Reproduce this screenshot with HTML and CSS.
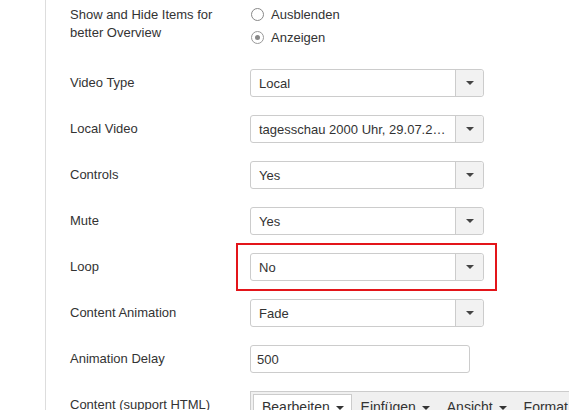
FILE: index.html
```html
<!DOCTYPE html>
<html lang="en">
<head>
    <meta charset="UTF-8">
    <title>Video Module Options</title>
    <link rel="stylesheet" href="styles.css">
</head>
<body>
    <div class="panel">
        <div class="row row-top row-first">
            <div class="label">Show and Hide Items for better Overview</div>
            <div class="radios">
                <label class="radio"><span class="dot"></span>Ausblenden</label>
                <label class="radio"><span class="dot checked"></span>Anzeigen</label>
            </div>
        </div>

        <div class="row">
            <div class="label">Video Type</div>
            <div class="select"><span class="value">Local</span><span class="arrow"></span></div>
        </div>

        <div class="row">
            <div class="label">Local Video</div>
            <div class="select"><span class="value">tagesschau 2000 Uhr, 29.07.2015 (mp4)</span><span class="arrow"></span></div>
        </div>

        <div class="row">
            <div class="label">Controls</div>
            <div class="select"><span class="value">Yes</span><span class="arrow"></span></div>
        </div>

        <div class="row">
            <div class="label">Mute</div>
            <div class="select"><span class="value">Yes</span><span class="arrow"></span></div>
        </div>

        <div class="row">
            <div class="label">Loop</div>
            <div class="highlight">
                <div class="select"><span class="value">No</span><span class="arrow"></span></div>
            </div>
        </div>

        <div class="row">
            <div class="label">Content Animation</div>
            <div class="select"><span class="value">Fade</span><span class="arrow"></span></div>
        </div>

        <div class="row">
            <div class="label">Animation Delay</div>
            <div class="input">500</div>
        </div>

        <div class="row row-top">
            <div class="label label-editor">Content (support HTML)</div>
            <div class="editor">
                <div class="menubar">
                    <span class="menu active">Bearbeiten <i class="caret"></i></span>
                    <span class="menu">Einfügen <i class="caret"></i></span>
                    <span class="menu">Ansicht <i class="caret"></i></span>
                    <span class="menu">Format <i class="caret"></i></span>
                </div>
            </div>
        </div>
    </div>
</body>
</html>
```

FILE: styles.css
```css
body {
    margin: 0;
    background: #fff;
    font-family: "Liberation Sans", Arial, sans-serif;
    font-size: 13px;
    color: #333;
    overflow: hidden;
}
.panel {
    margin-left: 45px;
    border-left: 1px solid #ddd;
    padding: 6px 0 0 24px;
    min-height: 410px;
}
.row {
    display: flex;
    align-items: center;
    margin-bottom: 18px;
}
.row-top {
    align-items: flex-start;
}
.row-first {
    margin-bottom: 20px;
}
.label {
    width: 180px;
    flex: none;
    line-height: 18px;
    padding-right: 20px;
    box-sizing: border-box;
}
.label-editor {
    padding-top: 5px;
}
.radios {
    margin-top: -3px;
}
.radio {
    display: flex;
    align-items: center;
    height: 23px;
}
.dot {
    width: 11px;
    height: 11px;
    border: 1px solid #888;
    border-radius: 50%;
    margin: 0 7px 0 1px;
    position: relative;
    background: #fff;
}
.dot.checked {
    border-color: #999;
}
.dot.checked::after {
    content: "";
    position: absolute;
    left: 3px;
    top: 3px;
    width: 5px;
    height: 5px;
    border-radius: 50%;
    background: #888;
}
.select {
    display: flex;
    width: 234px;
    height: 28px;
    border: 1px solid #ccc;
    border-radius: 3px;
    box-sizing: border-box;
    background: #fff;
}
.value {
    flex: 1;
    padding: 0 8px;
    line-height: 27px;
    white-space: nowrap;
    overflow: hidden;
    text-overflow: ellipsis;
}
.arrow {
    width: 27px;
    flex: none;
    border-left: 1px solid #ccc;
    background: #f2f2f2;
    border-radius: 0 3px 3px 0;
    position: relative;
}
.arrow::after {
    content: "";
    position: absolute;
    left: 10px;
    top: 11px;
    border-left: 4px solid transparent;
    border-right: 4px solid transparent;
    border-top: 4px solid #444;
}
.highlight {
    margin: -10px 0 -10px -14px;
    padding: 8px 11px 8px 12px;
    border: 2px solid #e3151a;
}
.input {
    width: 220px;
    height: 28px;
    border: 1px solid #ccc;
    border-radius: 3px;
    box-sizing: border-box;
    padding: 0 6px;
    line-height: 27px;
}
.editor {
    flex: 1;
    border: 1px solid #ccc;
    border-right: none;
    background: #f0f0f0;
    padding: 2px 0 0 2px;
    height: 30px;
    box-sizing: border-box;
    white-space: nowrap;
}
.menubar {
    display: flex;
}
.menu {
    padding: 4px 7px 6px 8px;
    border: 1px solid transparent;
    color: #333;
    font-size: 14px;
}
.menu.active {
    background: #fff;
    border-color: #ccc;
}
.caret {
    display: inline-block;
    border-left: 4px solid transparent;
    border-right: 4px solid transparent;
    border-top: 4px solid #333;
    vertical-align: middle;
    margin-left: 2px;
}
```
